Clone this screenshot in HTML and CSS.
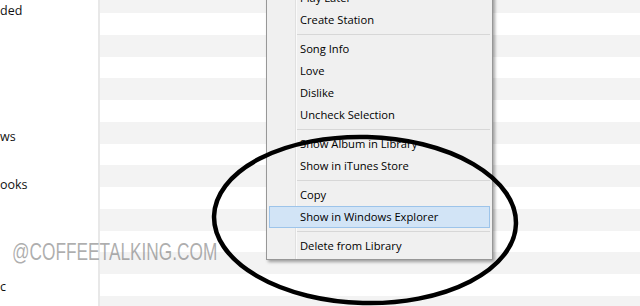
FILE: index.html
```html
<!DOCTYPE html>
<html lang="en">
<head>
  <meta charset="UTF-8">
  <title>iTunes context menu</title>
  <link rel="stylesheet" href="styles.css">
</head>
<body>

  <div class="app">
    <aside class="sidebar">
      <div class="side-item">ded</div>
      <div class="side-item gap-xl">ws</div>
      <div class="side-item gap-sm">ooks</div>
      <div class="side-item gap-lg">c</div>
    </aside>

    <main class="list">
      <div class="row"></div><div class="row"></div><div class="row"></div>
      <div class="row"></div><div class="row"></div><div class="row"></div>
      <div class="row"></div><div class="row"></div><div class="row"></div>
      <div class="row"></div><div class="row"></div><div class="row"></div>
      <div class="row"></div><div class="row"></div><div class="row"></div>
    </main>
  </div>

  <ul class="menu">
    <li class="item">Play Later</li>
    <li class="item">Create Station</li>
    <li class="sep"></li>
    <li class="item">Song Info</li>
    <li class="item">Love</li>
    <li class="item">Dislike</li>
    <li class="item">Uncheck Selection</li>
    <li class="sep"></li>
    <li class="item">Show Album in Library</li>
    <li class="item">Show in iTunes Store</li>
    <li class="sep"></li>
    <li class="item">Copy</li>
    <li class="item active">Show in Windows Explorer</li>
    <li class="sep"></li>
    <li class="item">Delete from Library</li>
  </ul>

  <div class="watermark"><span>@COFFEETALKING.COM</span></div>

  <svg class="circle" width="640" height="306" viewBox="0 0 640 306">
    <ellipse cx="365" cy="220" rx="151" ry="83" fill="none" stroke="#000" stroke-width="4.5" transform="rotate(1.5 365 220)"/>
  </svg>

</body>
</html>
```

FILE: styles.css
```css
* { margin: 0; padding: 0; box-sizing: border-box; }
body {
  width: 640px;
  height: 306px;
  overflow: hidden;
  position: relative;
  font-family: 'Open Sans', 'Noto Sans', sans-serif;
  background: white;
  color: #1a1a1a;
}
.app {
  display: flex;
  height: 306px;
}
.sidebar {
  width: 100px;
  flex-shrink: 0;
  border-right: 2px solid #e8e8e8;
  background: white;
  font-size: 12.5px;
}
.side-item {
  height: 22px;
  line-height: 22px;
  color: #111;
  white-space: nowrap;
}
.gap-xl { margin-top: 104px; }
.gap-sm { margin-top: 26px; }
.gap-lg { margin-top: 80px; }
.list {
  flex: 1;
  margin-top: -8.75px;
}
.row {
  height: 21.75px;
  background: white;
}
.row:nth-child(odd) {
  background: #f3f3f3;
}

/* context menu */
.menu {
  position: absolute;
  left: 266px;
  top: -16px;
  width: 227px;
  list-style: none;
  background: #f0f0f0;
  border: 1px solid #979797;
  padding: 2px;
  box-shadow: 2px 2px 3px rgba(0, 0, 0, 0.35);
  font-size: 11.2px;
  color: #000;
}
.menu::before {
  content: "";
  position: absolute;
  top: 0;
  bottom: 0;
  left: 28px;
  width: 1px;
  background: #e0e0e0;
  border-right: 1px solid #fafafa;
}
.item {
  position: relative;
  height: 22px;
  line-height: 20px;
  padding-left: 30px;
  border: 1px solid transparent;
  white-space: nowrap;
}
.item.active {
  background: #d2e4f6;
  border-color: #9dc4ea;
}
.sep {
  height: 1px;
  margin: 3px 0 3px 28px;
  background: #d7d7d7;
}

.watermark {
  position: absolute;
  left: 12px;
  top: 238px;
  font-family: 'Liberation Sans', Arial, sans-serif;
  font-size: 24px;
  color: rgba(120, 120, 120, 0.6);
  white-space: nowrap;
}
.watermark span {
  display: inline-block;
  transform: scaleX(0.72);
  transform-origin: left center;
}
.circle {
  position: absolute;
  left: 0;
  top: 0;
}
```
